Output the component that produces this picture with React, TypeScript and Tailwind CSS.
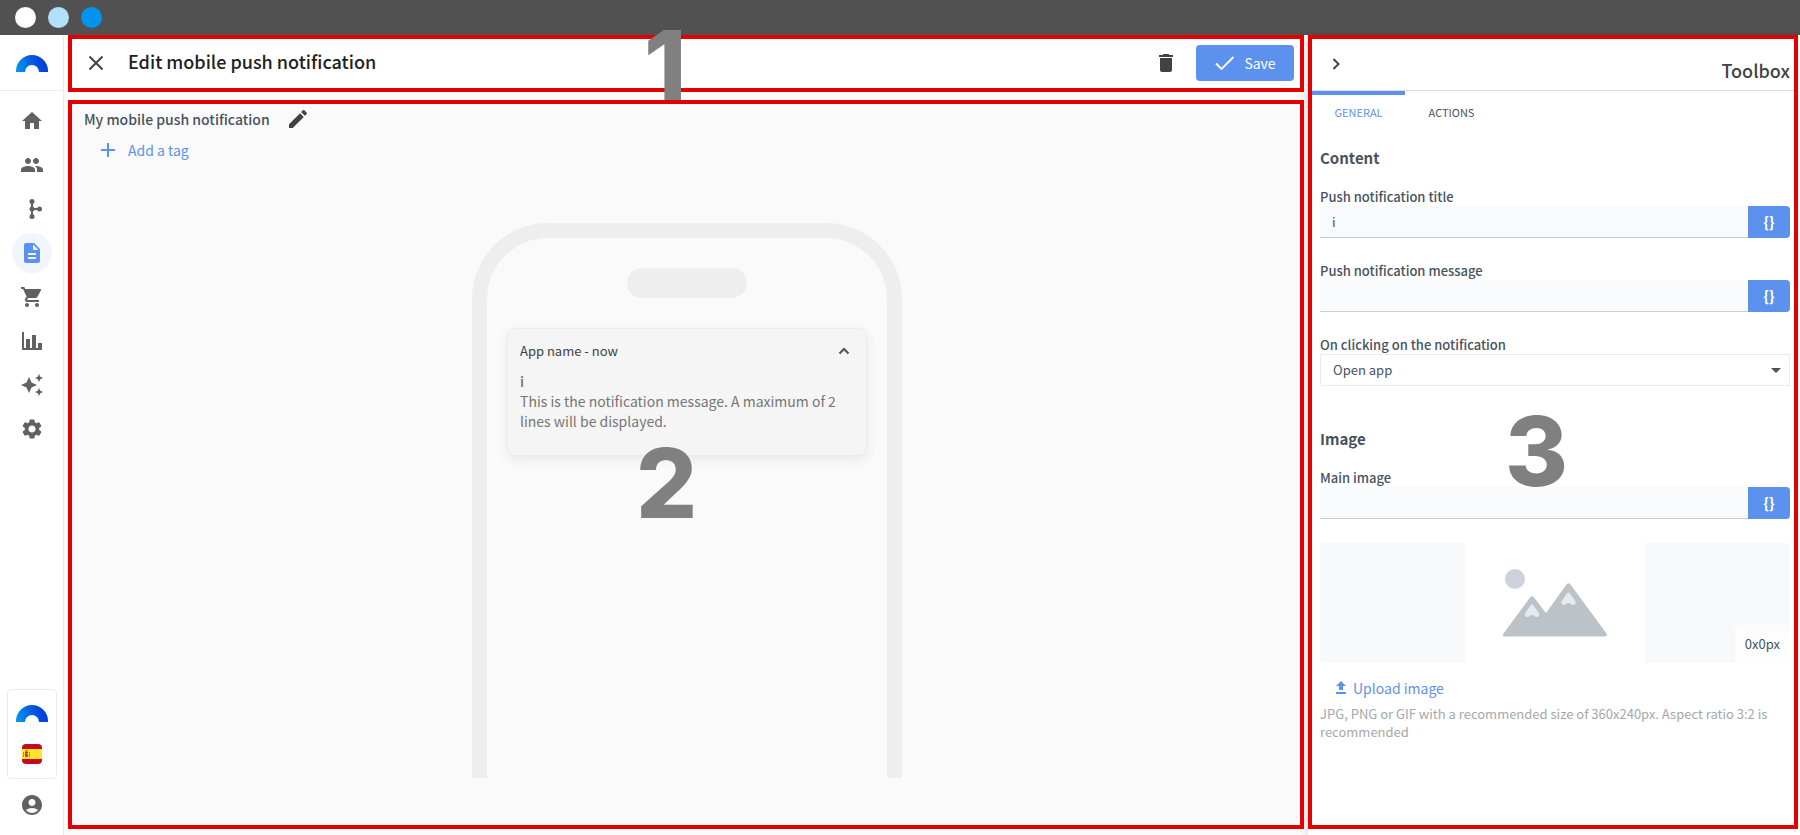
import { useState } from "react";
import {
  MdAccountCircle,
  MdArrowDropDown,
  MdAutoAwesome,
  MdCreate,
  MdDelete,
  MdDescription,
  MdHome,
  MdPeople,
  MdSettings,
  MdShoppingCart,
} from "react-icons/md";

function Logo({ id }: { id: string }) {
  return (
    <svg width="32" height="17" viewBox="0 0 32 17" aria-hidden="true">
      <defs>
        <linearGradient id={id} x1="0" y1="0.6" x2="1" y2="0.4">
          <stop offset="0" stopColor="#0693ea" />
          <stop offset="0.75" stopColor="#0345dd" />
          <stop offset="1" stopColor="#0339d8" />
        </linearGradient>
      </defs>
      <path d="M0 17v-1a16 16 0 0 1 32 0v1h-9a7 7 0 0 0-14 0z" fill={`url(#${id})`} />
    </svg>
  );
}

function BranchIcon() {
  return (
    <svg width="24" height="24" viewBox="0 0 24 24" fill="currentColor">
      <path d="M11 4h2v7h6v2h-6v7h-2z" />
      <circle cx="12" cy="4.5" r="2.5" />
      <circle cx="12" cy="12" r="2.5" />
      <circle cx="12" cy="19.5" r="2.5" />
      <circle cx="19.5" cy="12" r="2.5" />
    </svg>
  );
}

function ChartIcon() {
  return (
    <svg width="24" height="24" viewBox="0 0 24 24" fill="currentColor">
      <path d="M2 3h2v16h2v-9h4v9h2V6h4v13h2v-5h4v7H2z" />
    </svg>
  );
}

function SpainFlag() {
  return (
    <svg width="20" height="20" viewBox="0 0 20 20" className="rounded-[4px]">
      <path fill="#c60b1e" d="M0 0h20v20H0z" />
      <path fill="#ffe62e" d="M0 5h20v10H0z" />
      <path fill="#ad8a5c" d="M1 8h1v5H1zM7 8h1v5H7z" />
      <path fill="#b5382c" d="M3 8h3v3.500a1.500 1.500 0 0 1-3 0z" />
      <path fill="#8a4b33" d="M3 6.500h3v1H3z" />
      <path fill="#c9a7a7" d="M4.500 9h1.500v1.500H4.500z" />
    </svg>
  );
}

function Mountains() {
  return (
    <svg width="104" height="68" viewBox="0 0 104 68" aria-hidden="true">
      <circle cx="12" cy="10" r="10" fill="#ced3db" />
      <path
        d="M0.500 64.500L27 28.500q2-2.500 4 0L43 44l20.500-28.500q2-2.500 4 0L103.500 64.500q1.500 3-2 3H2q-3.500 0-1.500-3z"
        fill="#bbc2c8"
      />
      <path d="M27.500 36.500q1.500-2 3 0l5.500 8q1 3-2.500 3.500-1.500 0-2.500-1.500-2-1-4 0-1 1.500-2.500 1.500-3.500-.5-2.500-3.500z" fill="#e8ebee" />
      <path d="M64 24.500q1.500-2 3 0l5.500 8q1 3-2.500 3.500-1.500 0-2.500-1.500-2-1-4 0-1 1.500-2.500 1.500-3.500-.5-2.500-3.500z" fill="#e8ebee" />
    </svg>
  );
}

const NAV = [
  { name: "Home", icon: <MdHome size={24} /> },
  { name: "Contacts", icon: <MdPeople size={24} /> },
  { name: "Workflows", icon: <BranchIcon /> },
  { name: "Content", icon: <MdDescription size={24} /> },
  { name: "Shop", icon: <MdShoppingCart size={24} /> },
  { name: "Analytics", icon: <ChartIcon /> },
  { name: "Assistant", icon: <MdAutoAwesome size={24} /> },
  { name: "Settings", icon: <MdSettings size={24} /> },
];

function Sidebar() {
  const [active, setActive] = useState("Content");

  return (
    <aside className="w-16 shrink-0 flex flex-col items-center bg-white border-r border-[#ececec] text-[#616161]">
      <a href="#" aria-label="Dashboard" className="w-full h-14 pt-[2px] flex items-center justify-center border-b border-[#ececec]">
        <Logo id="logo-top" />
      </a>
      <nav className="flex flex-col gap-1 pt-[10px]">
        {NAV.map((item) => (
          <button
            key={item.name}
            type="button"
            aria-label={item.name}
            onClick={() => setActive(item.name)}
            className={`size-10 rounded-full flex items-center justify-center ${
              active === item.name ? "bg-[#f0f5fe] text-[#5c92ed]" : ""
            }`}
          >
            {item.icon}
          </button>
        ))}
      </nav>
      <div className="mt-auto w-[50px] h-[90px] border border-[#ececec] rounded-[4px] flex flex-col items-center justify-center gap-[22px]">
        <Logo id="logo-account" />
        <SpainFlag />
      </div>
      <button type="button" aria-label="Account" className="mt-[14px] mb-[18px]">
        <MdAccountCircle size={24} />
      </button>
    </aside>
  );
}

interface VariableFieldProps {
  id: string;
  label: string;
  value: string;
  onChange: (value: string) => void;
}

function VariableField({ id, label, value, onChange }: VariableFieldProps) {
  return (
    <div className="flex flex-col">
      <label htmlFor={id} className="text-[13px] leading-[18px] font-medium">
        {label}
      </label>
      <div className="flex h-8">
        <input
          id={id}
          type="text"
          value={value}
          onChange={(e) => onChange(e.target.value)}
          className="flex-1 min-w-0 px-3 bg-[#f8fafc] border-b border-[#c9ced6] text-[13px] focus:outline-none"
        />
        <button
          type="button"
          aria-label="Insert variable"
          className="w-[42px] rounded-r-[4px] bg-[#5c92ed] text-white text-[15px] font-bold leading-[30px]"
        >
          {"{}"}
        </button>
      </div>
    </div>
  );
}

function Toolbox({ title, setTitle }: { title: string; setTitle: (v: string) => void }) {
  const [tab, setTab] = useState("GENERAL");
  const [message, setMessage] = useState("");
  const [image, setImage] = useState("");

  return (
    <section className="relative flex-1 border-4 border-[#e40000] bg-white text-[#47535e]">
      <div className="h-[52px] flex items-center justify-between pl-3 pr-1 pb-[2px] border-b border-[#dedede] text-[#424242]">
        <button type="button" aria-label="Collapse toolbox" className="size-6 flex items-center justify-center">
          <svg width="24" height="24" viewBox="0 0 24 24" fill="none" stroke="currentColor" strokeWidth="2">
            <path d="M9.500 7l5 5-5 5" />
          </svg>
        </button>
        <h2 className="pt-3 text-[18px] leading-6 font-medium">Toolbox</h2>
      </div>

      <div className="flex">
        {["GENERAL", "ACTIONS"].map((name) => (
          <button
            key={name}
            type="button"
            onClick={() => setTab(name)}
            className={`w-[93px] h-[38px] border-t-4 text-[11px] leading-[34px] ${
              tab === name ? "border-[#5c92ed] text-[#5c92ed]" : "border-transparent"
            }`}
          >
            {name}
          </button>
        ))}
      </div>

      <div className="pl-2 pr-1 pt-[17px]">
        <h3 className="text-[15px] leading-6 font-bold">Content</h3>
        <div className="flex flex-col gap-6 pt-[18px]">
          <VariableField id="push-title" label="Push notification title" value={title} onChange={setTitle} />
          <VariableField id="push-message" label="Push notification message" value={message} onChange={setMessage} />
          <div className="flex flex-col">
            <label htmlFor="click-action" className="text-[13px] leading-[18px] font-medium">
              On clicking on the notification
            </label>
            <div className="relative">
              <select
                id="click-action"
                className="w-full h-8 px-3 appearance-none bg-white border border-[#ececec] text-[13px] focus:outline-none"
              >
                <option>Open app</option>
              </select>
              <MdArrowDropDown size={24} className="absolute right-[2px] top-1 pointer-events-none" />
            </div>
          </div>
        </div>

        <h3 className="pt-[41px] pb-[18px] text-[15px] leading-6 font-bold">Image</h3>
        <VariableField id="main-image" label="Main image" value={image} onChange={setImage} />

        <div className="relative mt-6 h-[120px] flex justify-center rounded-[4px] bg-[#f7f9fb] overflow-hidden">
          <div className="w-[180px] flex items-center justify-center bg-white">
            <Mountains />
          </div>
          <span className="absolute right-0 bottom-0 px-[10px] rounded-tl-[4px] bg-[#fdfdfd] text-[13px] leading-[38px]">
            0x0px
          </span>
        </div>

        <button type="button" className="mt-[15px] ml-3 flex items-center gap-[3px] text-[#5c92ed] text-[14px] leading-5">
          <svg width="18" height="18" viewBox="0 0 18 18" fill="currentColor">
            <path d="M9 2l5 5h-3v4H7V7H4zM4 13h10v2H4z" />
          </svg>
          Upload image
        </button>
        <p className="pt-[7px] text-[13px] leading-[18px] text-[#a5a8aa]">
          JPG, PNG or GIF with a recommended size of 360x240px. Aspect ratio 3:2 is recommended
        </p>
      </div>

      <span className="absolute left-[193px] top-[364px] font-['Inter',sans-serif] font-extrabold text-[96px] leading-[96px] text-[#808080] pointer-events-none">
        3
      </span>
    </section>
  );
}

function PhonePreview({ title }: { title: string }) {
  return (
    <div className="w-[430px] h-[555px] mx-auto rounded-t-[76px] border-[15px] border-b-0 border-[#eeeeee] flex flex-col items-center px-5 pt-[30px]">
      <div className="w-[120px] h-[30px] rounded-full bg-[#eeeeee]" />
      <div className="mt-[30px] w-full h-[128px] rounded-[8px] border border-[#ececec] bg-[#f5f5f5] px-3 pt-[11px] shadow-[0_4px_12px_rgba(0,0,0,0.07)]">
        <div className="flex items-center justify-between text-[#424242]">
          <span className="text-[13px] leading-[22px]">App name - now</span>
          <svg width="20" height="20" viewBox="0 0 20 20" fill="none" stroke="#47535e" strokeWidth="2">
            <path d="M5.500 12.500L10 8l4.500 4.500" />
          </svg>
        </div>
        <p className="pt-[9px] text-[14px] leading-5 font-medium text-[#6f6f6f]">{title}</p>
        <p className="text-[14px] leading-5 text-[#757575]">
          This is the notification message. A maximum of 2 lines will be displayed.
        </p>
      </div>
    </div>
  );
}

export default function App() {
  const [title, setTitle] = useState("i");

  return (
    <div className="min-h-screen flex flex-col bg-[#fafafa] font-['Source_Sans_Pro','Noto_Sans_CJK_SC',sans-serif]">
      {/* Window bar */}
      <div className="h-[35px] shrink-0 flex items-center gap-3 px-[15px] bg-[#515151]">
        <span className="size-[21px] rounded-full bg-white" />
        <span className="size-[21px] rounded-full bg-[#b3dff9]" />
        <span className="size-[21px] rounded-full bg-[#0094ed]" />
      </div>

      <div className="flex-1 flex">
        <Sidebar />

        <main className="flex-1 min-w-0 flex flex-col">
          {/* Action bar */}
          <div className="px-1 bg-white">
            <header className="relative h-[57px] flex items-center border-4 border-[#e40000] pl-3 pr-[6px] pb-px text-[#424242]">
              <button type="button" aria-label="Close">
                <svg width="24" height="24" viewBox="0 0 24 24" fill="none" stroke="currentColor" strokeWidth="2">
                  <path d="M5.500 5.500l13 13M18.500 5.500l-13 13" />
                </svg>
              </button>
              <h1 className="pl-5 pb-1 text-[18px] leading-6 font-medium text-[#212121]">Edit mobile push notification</h1>
              <button type="button" aria-label="Delete" className="ml-auto mr-[18px]">
                <MdDelete size={24} />
              </button>
              <button
                type="button"
                className="h-9 w-[98px] flex items-center justify-center gap-2 rounded-[4px] bg-[#5c92ed] text-white text-[14px]"
              >
                <svg width="22" height="22" viewBox="0 0 22 22" fill="none" stroke="currentColor" strokeWidth="1.800">
                  <path d="M2 11.500l5.500 5.500L19.500 5" />
                </svg>
                Save
              </button>
              <span className="absolute left-[572px] -top-[22px] font-['Inter',sans-serif] font-extrabold text-[96px] leading-[96px] text-[#808080] pointer-events-none">
                1
              </span>
            </header>
          </div>

          {/* Canvas */}
          <section className="relative flex-1 mx-1 mt-2 mb-[6px] border-4 border-[#e40000]">
            <div className="flex items-center gap-4 pl-3 pt-[3px] text-[#47535e]">
              <h2 className="text-[14px] leading-6 font-medium">My mobile push notification</h2>
              <button type="button" aria-label="Rename" className="text-[#424242]">
                <MdCreate size={24} />
              </button>
            </div>
            <button type="button" className="mt-[7px] ml-6 flex items-center gap-2 text-[14px] leading-6 text-[#5c92ed]">
              <svg width="24" height="24" viewBox="0 0 24 24" fill="none" stroke="currentColor" strokeWidth="2">
                <path d="M12 5v14M5 12h14" />
              </svg>
              Add a tag
            </button>
            <div className="pt-[61px] pl-[2px]">
              <PhonePreview title={title} />
            </div>
            <span className="absolute left-[564px] top-[331px] font-['Inter',sans-serif] font-extrabold text-[96px] leading-[96px] text-[#808080] pointer-events-none">
              2
            </span>
          </section>
        </main>

        <div className="w-[492px] shrink-0 flex pr-[2px] pb-[6px] bg-white shadow-[-2px_0_6px_rgba(0,0,0,0.12)]">
          <Toolbox title={title} setTitle={setTitle} />
        </div>
      </div>
    </div>
  );
}
